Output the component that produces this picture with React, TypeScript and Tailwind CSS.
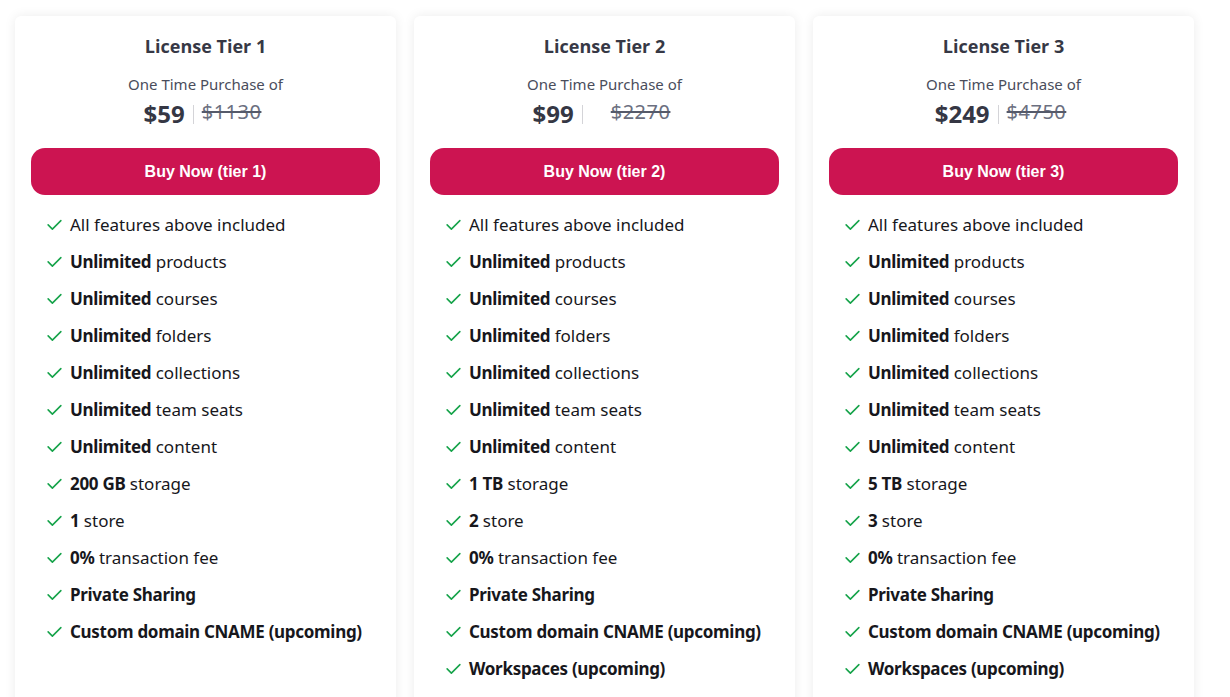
import React from 'react';

type Feature = { bold?: string; text?: string };

interface Tier {
    id: number;
    price: string;
    oldPrice: string;
    storage: string;
    stores: string;
    workspaces: boolean;
}

const tiers: Tier[] = [
    { id: 1, price: '$59', oldPrice: '$1130', storage: '200 GB', stores: '1', workspaces: false },
    { id: 2, price: '$99', oldPrice: '$2270', storage: '1 TB', stores: '2', workspaces: true },
    { id: 3, price: '$249', oldPrice: '$4750', storage: '5 TB', stores: '3', workspaces: true },
];

const featuresFor = (t: Tier): Feature[] => {
    const list: Feature[] = [
        { text: 'All features above included' },
        { bold: 'Unlimited', text: 'products' },
        { bold: 'Unlimited', text: 'courses' },
        { bold: 'Unlimited', text: 'folders' },
        { bold: 'Unlimited', text: 'collections' },
        { bold: 'Unlimited', text: 'team seats' },
        { bold: 'Unlimited', text: 'content' },
        { bold: t.storage, text: 'storage' },
        { bold: t.stores, text: 'store' },
        { bold: '0%', text: 'transaction fee' },
        { bold: 'Private Sharing' },
        { bold: 'Custom domain CNAME (upcoming)' },
    ];
    if (t.workspaces) list.push({ bold: 'Workspaces (upcoming)' });
    return list;
};

const Check = () => (
    <svg width="17" height="17" viewBox="0 0 24 24" fill="none" stroke="#16a34a" strokeWidth="2.2" strokeLinecap="round" strokeLinejoin="round" className="shrink-0">
        <path d="M3 12.5l6 6L21 6.5" />
    </svg>
);

const TierCard: React.FC<{ tier: Tier }> = ({ tier }) => (
    <div className="w-[381px] shrink-0 bg-white rounded-md shadow-[0_0_12px_rgba(0,0,0,0.08)] px-4 pt-[18px] pb-10">
        <h3 className="text-center text-[18px] leading-6 font-bold text-[#363845] font-['Open_Sans',sans-serif]">
            License Tier {tier.id}
        </h3>
        <p className="mt-4 text-center text-[15px] leading-5 text-[#4a4d5c]">One Time Purchase of</p>
        <div className="mt-[6px] flex items-center justify-center h-7 -ml-[6px]">
            <span className="text-[24px] font-bold text-[#353744]">{tier.price}</span>
            <span className="mx-[8px] w-px h-[19px] bg-[#d4d4d8]" />
            {tier.id === 2 && <span className="w-[20px]" />}
            <span className="text-[20px] tracking-[0.5px] text-[#6b6f80] line-through decoration-[#555a6a] -mt-1">{tier.oldPrice}</span>
        </div>
        <button className="mt-5 w-full h-[47px] rounded-[14px] bg-[#cc1451] text-white text-[16px] font-bold font-['Liberation_Sans',Arial,sans-serif]">
            Buy Now (tier {tier.id})
        </button>
        <ul className="mt-[11px] pl-[15px] flex flex-col">
            {featuresFor(tier).map((f, i) => (
                <li key={i} className="h-[37px] flex items-center gap-[7px] text-[17px] text-[#17171c]">
                    <Check />
                    <span>
                        {f.bold && <b className="font-bold tracking-[-0.3px]">{f.bold}</b>}
                        {f.bold && f.text ? ' ' : ''}
                        {f.text}
                    </span>
                </li>
            ))}
        </ul>
    </div>
);

export default function App() {
    return (
        <div className="min-h-[697px] bg-white font-['Noto_Sans',sans-serif] overflow-hidden">
            <div className="flex gap-[18px] pl-[15px] pt-4">
                {tiers.map(t => (
                    <TierCard key={t.id} tier={t} />
                ))}
            </div>
        </div>
    );
}
